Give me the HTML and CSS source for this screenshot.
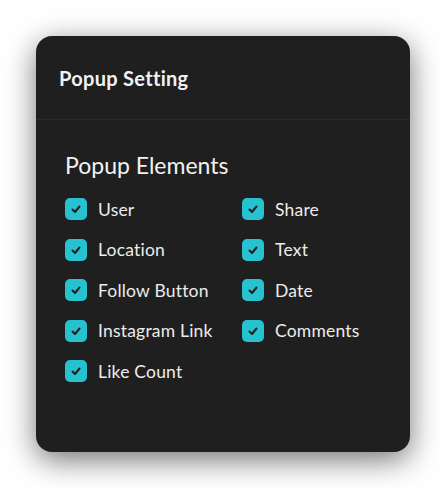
FILE: index.html
```html
<!DOCTYPE html>
<html lang="en">
<head>
    <meta charset="UTF-8">
    <title>Popup Setting</title>
    <link rel="stylesheet" href="styles.css">
</head>
<body>

<div class="popup-card">
    <div class="popup-header">
        <h1>Popup Setting</h1>
    </div>

    <div class="popup-body">
        <h2>Popup Elements</h2>

        <div class="element-grid">
            <label class="check-item"><span class="check-box"><svg viewBox="0 0 22 22"><polyline points="7.5,11.5 10,14 14.5,8.5"/></svg></span>User</label>
            <label class="check-item"><span class="check-box"><svg viewBox="0 0 22 22"><polyline points="7.5,11.5 10,14 14.5,8.5"/></svg></span>Share</label>
            <label class="check-item"><span class="check-box"><svg viewBox="0 0 22 22"><polyline points="7.5,11.5 10,14 14.5,8.5"/></svg></span>Location</label>
            <label class="check-item"><span class="check-box"><svg viewBox="0 0 22 22"><polyline points="7.5,11.5 10,14 14.5,8.5"/></svg></span>Text</label>
            <label class="check-item"><span class="check-box"><svg viewBox="0 0 22 22"><polyline points="7.5,11.5 10,14 14.5,8.5"/></svg></span>Follow Button</label>
            <label class="check-item"><span class="check-box"><svg viewBox="0 0 22 22"><polyline points="7.5,11.5 10,14 14.5,8.5"/></svg></span>Date</label>
            <label class="check-item"><span class="check-box"><svg viewBox="0 0 22 22"><polyline points="7.5,11.5 10,14 14.5,8.5"/></svg></span>Instagram Link</label>
            <label class="check-item"><span class="check-box"><svg viewBox="0 0 22 22"><polyline points="7.5,11.5 10,14 14.5,8.5"/></svg></span>Comments</label>
            <label class="check-item"><span class="check-box"><svg viewBox="0 0 22 22"><polyline points="7.5,11.5 10,14 14.5,8.5"/></svg></span>Like Count</label>
        </div>
    </div>
</div>

</body>
</html>
```

FILE: styles.css
```css
body {
    margin: 0;
    padding: 36px 0 37px 36px;
    background-color: white;
    font-family: Lato, "Noto Sans", sans-serif;
}
.popup-card {
    width: 374px;
    height: 416px;
    border-radius: 16px;
    background-color: #1f1f1f;
    color: #f2f2f2;
    box-shadow: 0 8px 30px rgba(0, 0, 0, 0.55);
    overflow: hidden;
}
.popup-header {
    height: 83px;
    display: flex;
    align-items: center;
    padding-left: 23px;
    border-bottom: 1px solid #2b2b2b;
}
.popup-header h1 {
    margin: 0;
    font-size: 20px;
    letter-spacing: 0.3px;
    font-weight: bold;
}
.popup-body {
    padding: 31px 29px 0;
}
.popup-body h2 {
    margin: 0 0 18px;
    font-size: 23px;
    line-height: 28px;
    font-weight: normal;
}
.element-grid {
    display: grid;
    grid-template-columns: 177px 177px;
    row-gap: 16.5px;
}
.check-item {
    display: flex;
    align-items: center;
    height: 24px;
    font-size: 17.5px;
    letter-spacing: 0.2px;
    color: #ececec;
}
.check-box {
    width: 22px;
    height: 22px;
    margin-right: 11px;
    border-radius: 5px;
    background-color: #26c2d0;
    flex-shrink: 0;
}
.check-box svg {
    display: block;
    width: 22px;
    height: 22px;
    fill: none;
    stroke: #1f1f1f;
    stroke-width: 2;
    stroke-linecap: round;
    stroke-linejoin: round;
}
```
